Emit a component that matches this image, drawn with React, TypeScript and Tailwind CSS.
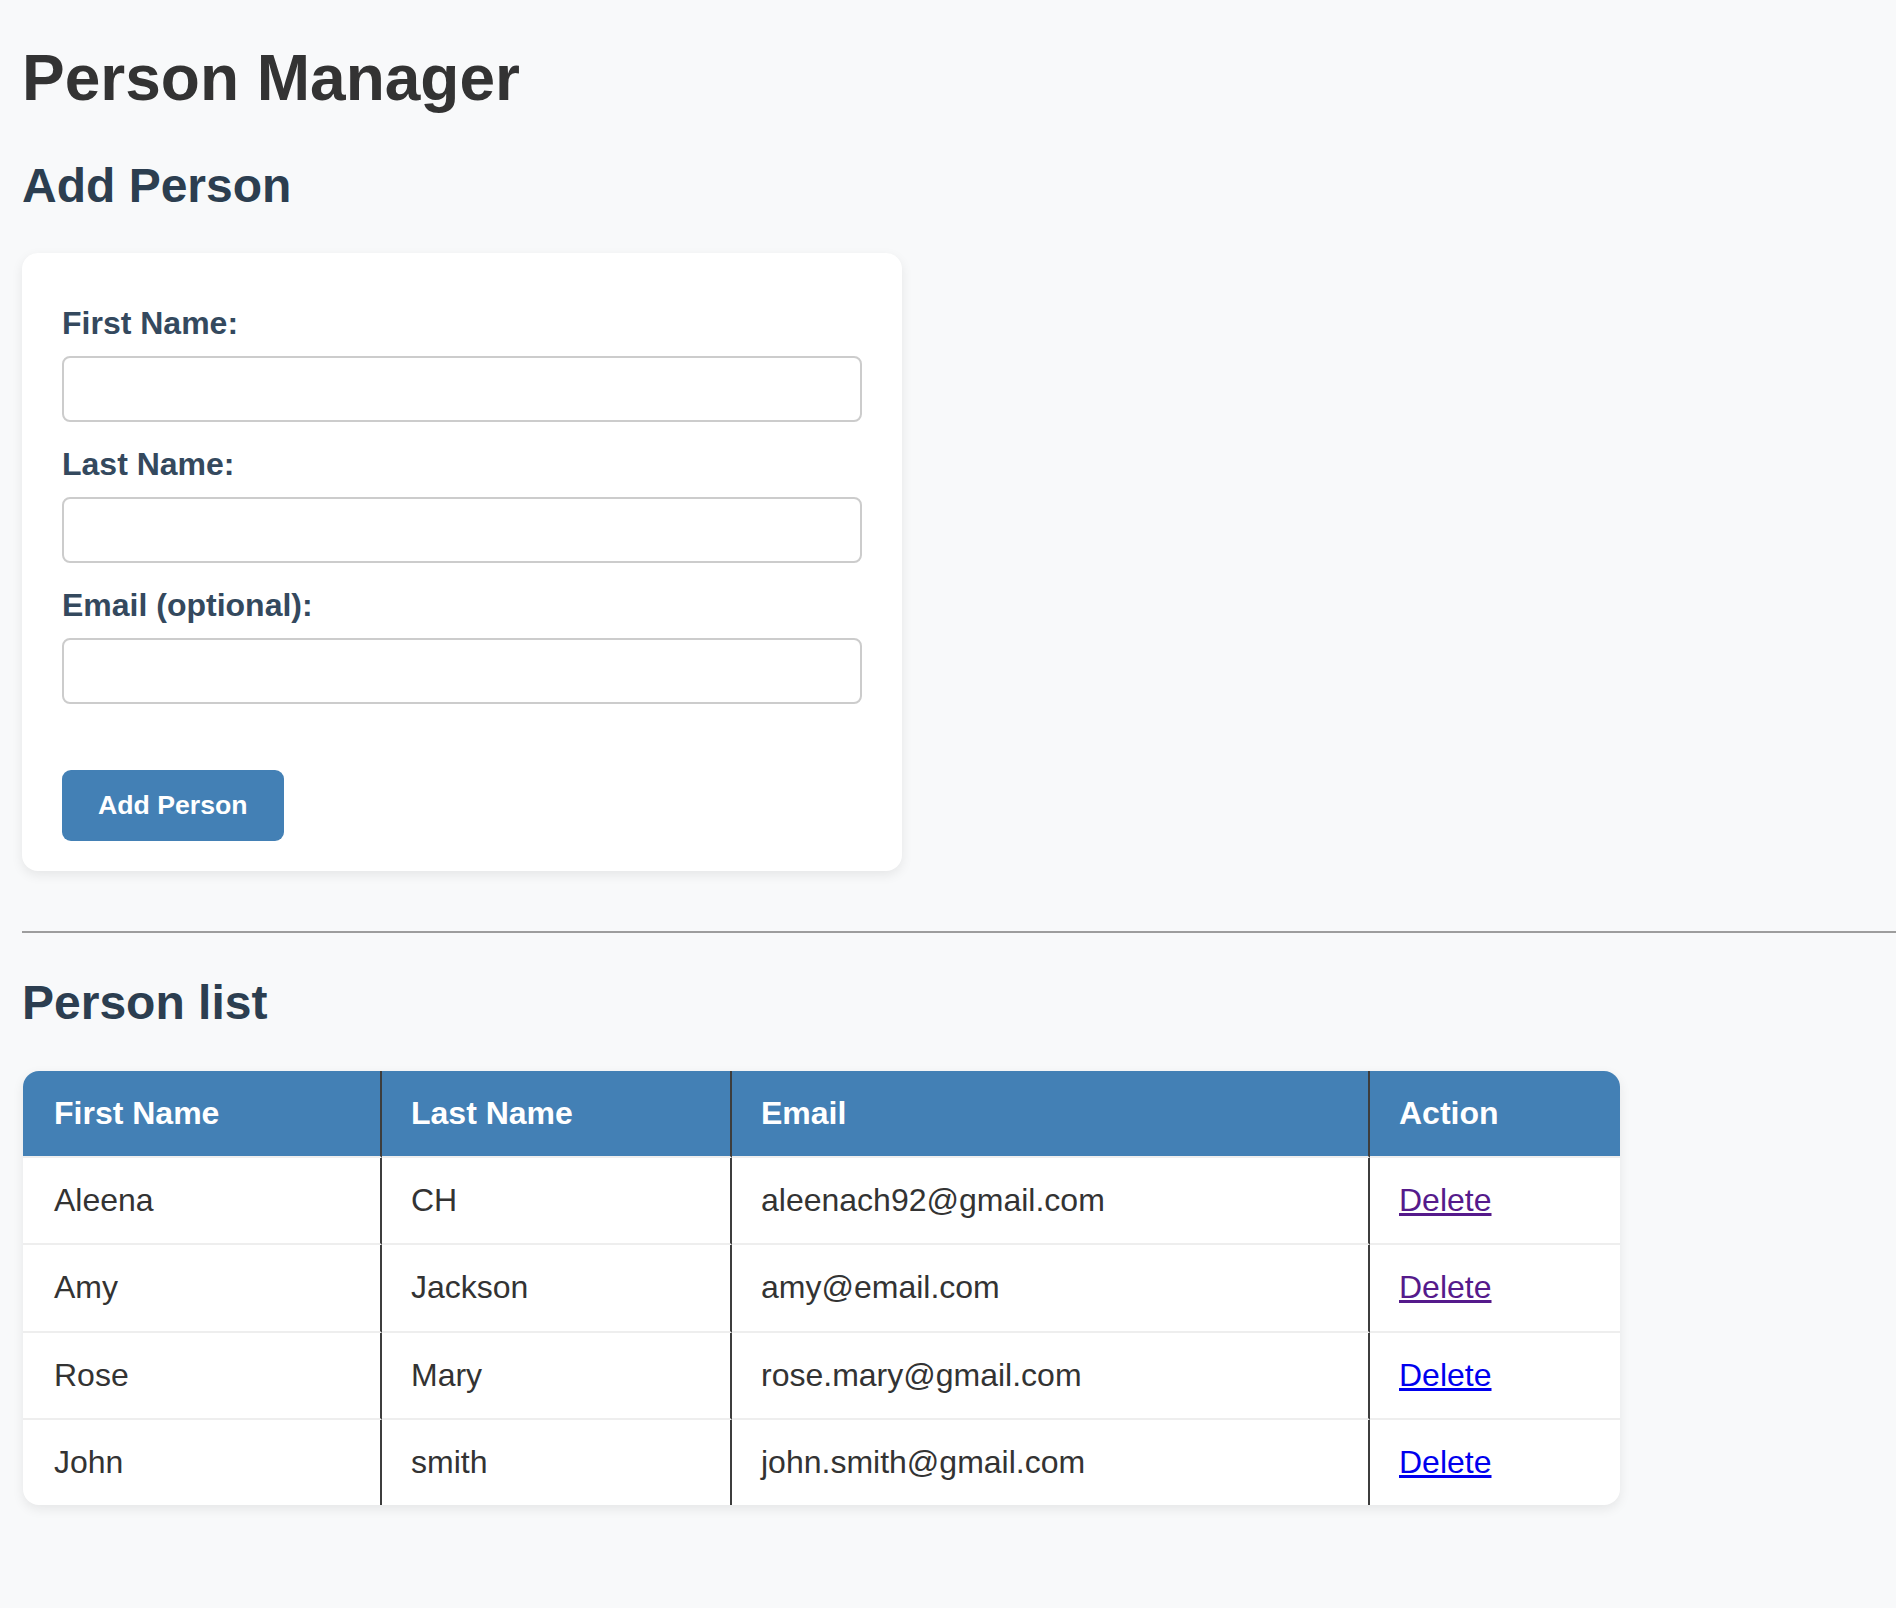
import { useState } from "react";

type Person = {
  firstName: string;
  lastName: string;
  email: string;
  visited?: boolean;
};

const PEOPLE: Person[] = [
  { firstName: "Aleena", lastName: "CH", email: "aleenach92@gmail.com", visited: true },
  { firstName: "Amy", lastName: "Jackson", email: "amy@email.com", visited: true },
  { firstName: "Rose", lastName: "Mary", email: "rose.mary@gmail.com" },
  { firstName: "John", lastName: "smith", email: "john.smith@gmail.com" },
];

const FIELDS = [
  { id: "firstName", label: "First Name:" },
  { id: "lastName", label: "Last Name:" },
  { id: "email", label: "Email (optional):" },
];

const COLUMNS = ["First Name", "Last Name", "Email", "Action"];

export default function App() {
  const [people, setPeople] = useState<Person[]>(PEOPLE);

  return (
    <div className="min-h-screen bg-[#f8f9fa] pl-[22px] pt-[41px] pb-[80px] font-['Liberation_Sans',Arial,sans-serif] text-[#333]">
      <h1 className="text-[64px] font-bold leading-[74px] text-[#333]">Person Manager</h1>

      <h2 className="mt-[43px] text-[48px] font-bold leading-[55px] text-[#2c3e50]">Add Person</h2>

      {/* Form card */}
      <form
        className="mt-[40px] w-[880px] rounded-[16px] bg-white px-[40px] pb-[30px] pt-[52px] shadow-[0_4px_12px_rgba(0,0,0,0.08)]"
        onSubmit={(e) => e.preventDefault()}
      >
        {FIELDS.map((f, i) => (
          <div key={f.id} className={i < FIELDS.length - 1 ? "mb-[24px]" : ""}>
            <label
              htmlFor={f.id}
              className="mb-[14px] block text-[32px] font-bold leading-[37px] text-[#34495e]"
            >
              {f.label}
            </label>
            <input
              id={f.id}
              type="text"
              className="block h-[66px] w-[800px] rounded-[8px] border-2 border-[#cccccc] bg-white px-[16px] text-[32px] outline-none"
            />
          </div>
        ))}
        <button
          type="submit"
          className="mt-[66px] h-[71px] rounded-[9px] bg-[#4380b5] px-[36px] text-[26.67px] font-bold leading-[31px] text-white"
        >
          Add Person
        </button>
      </form>

      <hr className="mt-[60px] border-0 border-t-2 border-t-[#9d9d9d]" />

      <h2 className="mt-[42px] text-[48px] font-bold leading-[55px] text-[#2c3e50]">Person list</h2>

      {/* Person table */}
      <div className="ml-px mt-[41px] w-[1597px] overflow-hidden rounded-[16px] bg-white shadow-[0_4px_12px_rgba(0,0,0,0.08)]">
        <table className="w-full table-fixed border-separate border-spacing-0 text-left">
          <colgroup>
            <col className="w-[359px]" />
            <col className="w-[350px]" />
            <col className="w-[638px]" />
            <col className="w-[250px]" />
          </colgroup>
          <thead>
            <tr className="bg-[#4380b5]">
              {COLUMNS.map((c, i) => (
                <th
                  key={c}
                  className={
                    i === 0
                      ? "border-b-2 border-r-2 border-b-[#eeeeee] border-r-[#3d3d3d] py-[24px] pl-[31px] pr-[29px] text-[32px] font-bold leading-[37px] text-white"
                      : i < COLUMNS.length - 1
                        ? "border-b-2 border-r-2 border-b-[#eeeeee] border-r-[#3d3d3d] px-[29px] py-[24px] text-[32px] font-bold leading-[37px] text-white"
                        : "border-b-2 border-b-[#eeeeee] px-[29px] py-[24px] text-[32px] font-bold leading-[37px] text-white"
                  }
                >
                  {c}
                </th>
              ))}
            </tr>
          </thead>
          <tbody>
            {people.map((p, r) => {
              const last = r === people.length - 1;
              const rowBorder = last ? "" : "border-b-2 border-b-[#eeeeee]";
              const cell = `${rowBorder} border-r-2 border-r-[#3d3d3d] py-[24px] pr-[29px] text-[32px] leading-[37.3px] text-[#333]`;
              return (
                <tr key={p.email}>
                  <td className={`${cell} pl-[31px]`}>{p.firstName}</td>
                  <td className={`${cell} pl-[29px]`}>{p.lastName}</td>
                  <td className={`${cell} pl-[29px]`}>{p.email}</td>
                  <td className={`${rowBorder} px-[29px] py-[24px] text-[32px] leading-[37.3px]`}>
                    <a
                      href="#"
                      onClick={(e) => {
                        e.preventDefault();
                        setPeople((list) => list.filter((x) => x.email !== p.email));
                      }}
                      className={p.visited ? "text-[#551a8b] underline" : "text-[#0000ee] underline"}
                    >
                      Delete
                    </a>
                  </td>
                </tr>
              );
            })}
          </tbody>
        </table>
      </div>
    </div>
  );
}
